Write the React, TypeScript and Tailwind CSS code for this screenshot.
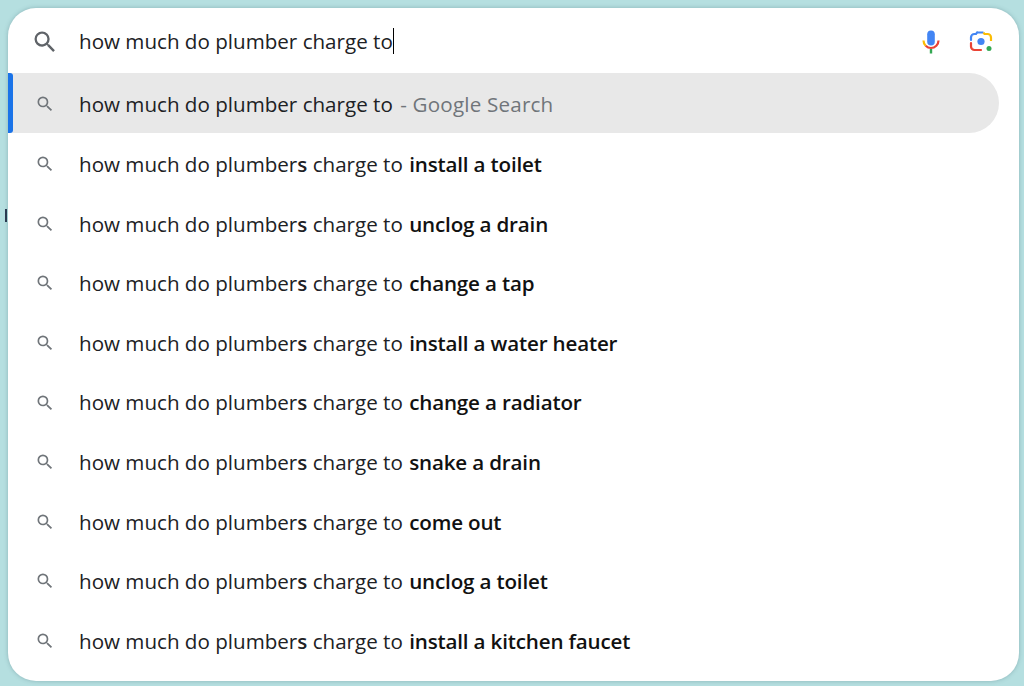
const suggestions = [
	"install a toilet",
	"unclog a drain",
	"change a tap",
	"install a water heater",
	"change a radiator",
	"snake a drain",
	"come out",
	"unclog a toilet",
	"install a kitchen faucet",
];

const SearchIcon = (props: { className: string }) => {
	return (
		<svg className={props.className} viewBox="0 0 24 24" fill="currentColor">
			<path d="M15.5 14h-.79l-.28-.27A6.471 6.471 0 0 0 16 9.5 6.5 6.5 0 1 0 9.5 16c1.61 0 3.09-.59 4.23-1.57l.27.28v.79l5 4.99L20.49 19l-4.99-5zm-6 0C7.01 14 5 11.99 5 9.5S7.01 5 9.5 5 14 7.01 14 9.5 11.99 14 9.5 14z" />
		</svg>
	);
};

const MicIcon = () => {
	return (
		<svg className="h-[26px] w-[26px]" viewBox="0 0 26 26" fill="none">
			<rect x="9.2" y="1.5" width="7.6" height="15" rx="3.8" fill="#4285f4" />
			<path d="M5.5 11.5a7.5 7.5 0 0 0 2.2 5.3" stroke="#fbbc04" strokeWidth="2.2" />
			<path d="M7.7 16.8a7.5 7.5 0 0 0 10.6 0 7.5 7.5 0 0 0 2.2-5.3" stroke="#ea4335" strokeWidth="2.2" />
			<rect x="11.8" y="20" width="2.4" height="4.5" fill="#34a853" />
		</svg>
	);
};

const LensIcon = () => {
	return (
		<svg className="h-[26px] w-[26px]" viewBox="0 0 26 26" fill="none">
			<path d="M3 11V8.5a3.5 3.5 0 0 1 3.5-3.5H8l1-1.5" stroke="#4285f4" strokeWidth="2.2" strokeLinecap="round" />
			<path d="M9 3.5h6.5" stroke="#4285f4" strokeWidth="2.2" />
			<path d="M15.5 3.5l1 1.5h3A3.5 3.5 0 0 1 23 8.5V12" stroke="#fbbc04" strokeWidth="2.2" />
			<path d="M3 14v3.5A3.5 3.5 0 0 0 6.5 21H13" stroke="#ea4335" strokeWidth="2.2" strokeLinecap="round" />
			<circle cx="13" cy="12.5" r="3.6" fill="#4285f4" />
			<circle cx="21" cy="19.5" r="2.5" fill="#34a853" />
		</svg>
	);
};

const SuggestionRow = (props: { bold: string }) => {
	return (
		<div className="flex h-[59.6px] items-center">
			<SearchIcon className="ml-[27px] mt-[3px] h-5 w-5 shrink-0 text-[#70757a]" />
			<div className="ml-[24px] pt-[3px] text-[#202124]">
				how much do plumber<b className="font-semibold">s</b> charge to{" "}
				<b className="ml-px font-semibold tracking-[-0.17px] text-[#111]">{props.bold}</b>
			</div>
		</div>
	);
};

export default function App() {
	return (
		<div className="relative h-[686px] w-[1024px] overflow-hidden bg-[#b5dfe0] pl-2 pt-2 text-[20.6px] font-['Open_Sans','Noto_Sans',sans-serif] leading-none">
			<div className="absolute left-[5px] top-[209px] h-[13px] w-[2px] bg-[#2a3a50]" />
			<div className="h-[673px] w-[1011px] overflow-hidden rounded-[28px] bg-white shadow-[0_0_4px_rgba(60,100,110,0.35)]">
				<div className="flex h-[65px] items-center">
					<SearchIcon className="ml-[23px] mt-[2px] h-7 w-7 shrink-0 text-[#5f6368]" />
					<div className="ml-[20px] flex-1 text-[#202124]">
						<span className="relative top-[3px]">how much do plumber charge to</span>
						<span className="inline-block h-[26px] w-px bg-black align-middle" />
					</div>
					<div className="mr-[25px] mt-[2px] flex items-center gap-[24px]">
						<MicIcon />
						<LensIcon />
					</div>
				</div>
				<div className="relative flex h-[60px] w-[991px] items-center rounded-r-[30px] bg-[#e8e8e8]">
					<div className="absolute left-0 top-0 h-[60px] w-[5px] rounded-r-[3px] bg-[#1a73e8]" />
					<SearchIcon className="ml-[27px] mt-[1px] h-5 w-5 shrink-0 text-[#70757a]" />
					<div className="ml-[24px] pt-[3px] text-[#202124]">
						how much do plumber charge to <span className="ml-[2px] tracking-[0.2px] text-[#70757a]">- Google Search</span>
					</div>
				</div>
				{suggestions.map((bold) => (
					<SuggestionRow key={bold} bold={bold} />
				))}
			</div>
		</div>
	);
}
